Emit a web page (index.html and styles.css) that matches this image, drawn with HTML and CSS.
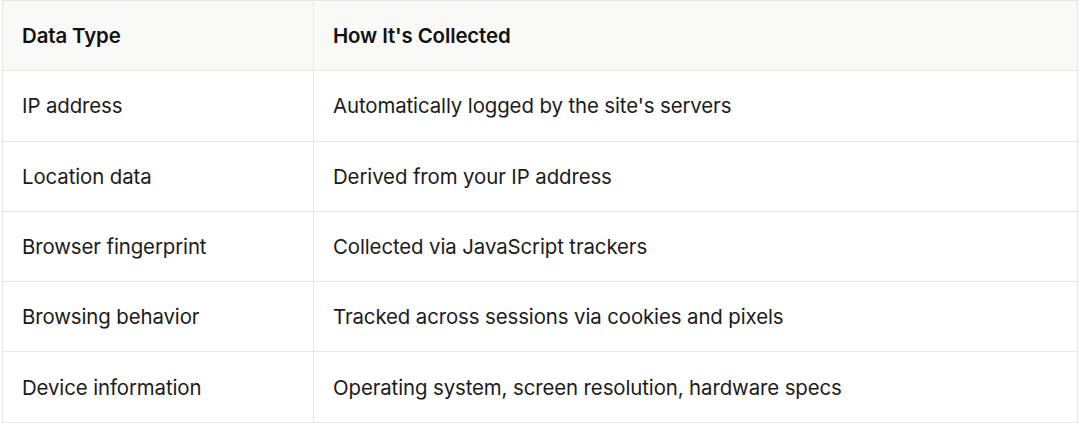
FILE: index.html
```html
<!DOCTYPE html>
<html lang="en">
<head>
<meta charset="utf-8">
<title>Data collection</title>
<link rel="stylesheet" href="styles.css">
</head>
<body>
<table class="data-table">
  <thead>
    <tr>
      <th class="col-type">Data Type</th>
      <th>How It's Collected</th>
    </tr>
  </thead>
  <tbody>
    <tr><td>IP address</td><td>Automatically logged by the site's servers</td></tr>
    <tr><td>Location data</td><td>Derived from your IP address</td></tr>
    <tr><td>Browser fingerprint</td><td>Collected via JavaScript trackers</td></tr>
    <tr><td>Browsing behavior</td><td>Tracked across sessions via cookies and pixels</td></tr>
    <tr><td>Device information</td><td>Operating system, screen resolution, hardware specs</td></tr>
  </tbody>
</table>
</body>
</html>
```

FILE: styles.css
```css
html, body {
  margin: 0;
  padding: 0;
  background: #ffffff;
}
body {
  padding: 0 2px 0 2px;
  font-family: Inter, "Liberation Sans", sans-serif;
  color: #1b1b1b;
}
.data-table {
  width: 1076px;
  border-collapse: collapse;
  table-layout: fixed;
}
.data-table th,
.data-table td {
  height: 70.3px;
  padding: 0 20px 0 19px;
  border: 1.5px solid #e6e6e4;
  text-align: left;
  vertical-align: middle;
  font-size: 20.4px;
  letter-spacing: -0.1px;
  box-sizing: border-box;
}
.data-table th {
  background: #f9f9f8;
  font-weight: 600;
  color: #111111;
}
.data-table td {
  font-weight: 400;
}
.col-type {
  width: 311px;
}
```
